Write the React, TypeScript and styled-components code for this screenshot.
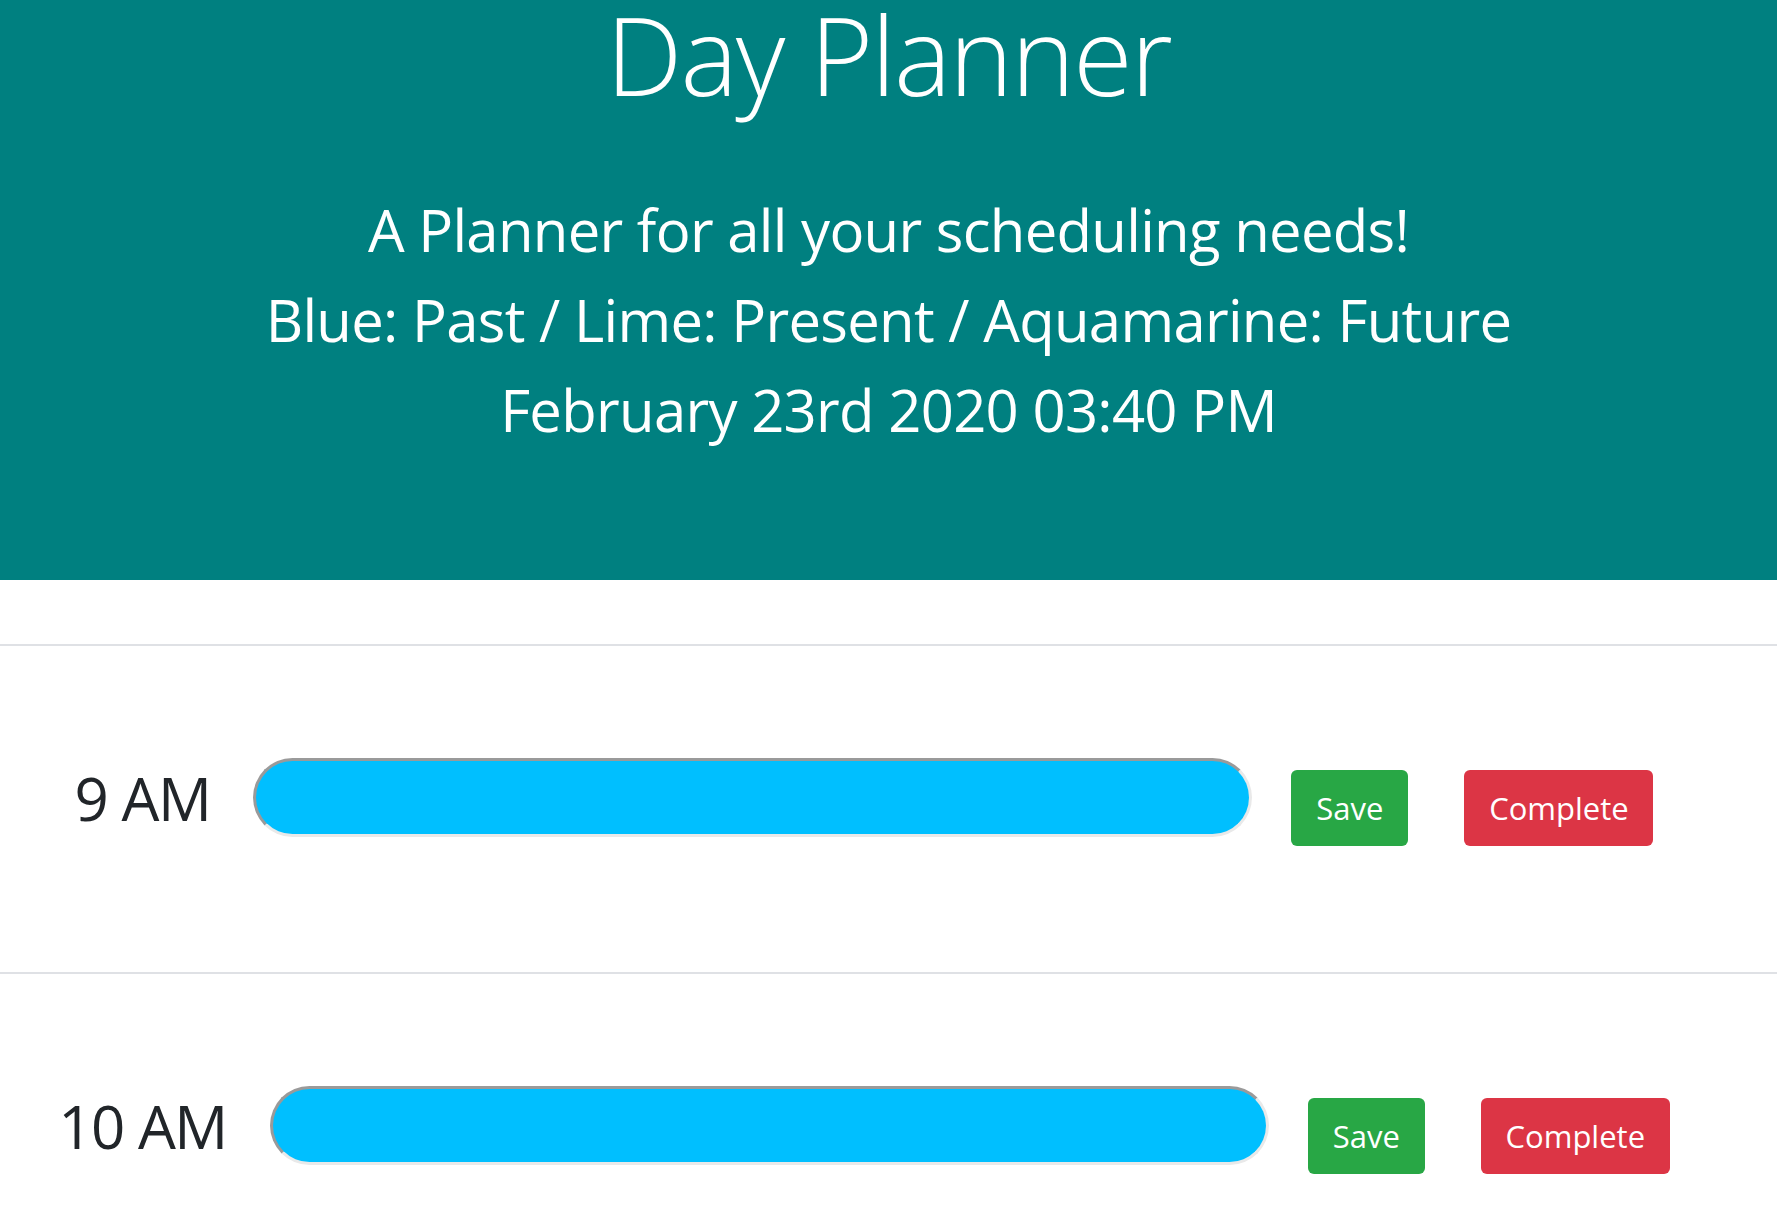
import React from "react";
import styled, { createGlobalStyle } from "styled-components";

const GlobalStyle = createGlobalStyle`
  html, body {
    margin: 0;
    padding: 0;
    background: #ffffff;
    font-family: "Open Sans", "Noto Sans", "Liberation Sans", sans-serif;
  }
  * { box-sizing: border-box; }
`;

const Header = styled.header`
  background: #008080;
  color: #ffffff;
  text-align: center;
  padding: 1px 0 125px;
  margin-bottom: 64px;
`;

const Title = styled.h1`
  margin: 0;
  font-size: 108px;
  font-weight: 300;
  line-height: 1;
  letter-spacing: -1.8px;
`;

const Lead = styled.p`
  margin: 0;
  font-size: 58px;
  font-weight: 400;
  line-height: 90px;
  letter-spacing: -0.7px;
`;

const LeadBlock = styled.div`
  margin-top: 76px;
`;

const Schedule = styled.main`
  display: flex;
  flex-direction: column;
`;

const HourRow = styled.section`
  display: flex;
  justify-content: center;
  align-items: flex-start;
  height: 328px;
  border-top: 2px solid #dfe1e5;
  padding-right: 49px;
`;

const HourLabel = styled.div`
  margin-top: 122px;
  margin-right: 43px;
  font-size: 60px;
  line-height: 1;
  letter-spacing: -1.5px;
  color: #212529;
  white-space: nowrap;
`;

const Entry = styled.textarea<{ $tense: "past" | "present" | "future" }>`
  margin-top: 112px;
  margin-right: 39px;
  width: 999px;
  height: 79px;
  resize: none;
  border-radius: 40px;
  border-style: solid;
  border-width: 3px;
  border-color: #9a9a9a #e9e9e9 #e9e9e9 #9a9a9a;
  outline: none;
  padding: 10px 30px;
  font-family: inherit;
  font-size: 28px;
  background: ${(p) =>
    p.$tense === "past" ? "#00bfff" : p.$tense === "present" ? "#00ff00" : "#7fffd4"};
`;

const ActionButton = styled.button<{ $variant: "save" | "complete" }>`
  margin-top: 124px;
  margin-right: ${(p) => (p.$variant === "save" ? "56px" : "0")};
  width: ${(p) => (p.$variant === "save" ? "117px" : "189px")};
  height: 76px;
  display: flex;
  align-items: center;
  justify-content: center;
  border: none;
  border-radius: 6px;
  font-family: inherit;
  font-size: 31px;
  line-height: normal;
  color: #ffffff;
  background: ${(p) => (p.$variant === "save" ? "#28a745" : "#dc3545")};
  cursor: pointer;
`;

const hours = ["9 AM", "10 AM", "11 AM", "12 PM", "1 PM", "2 PM", "3 PM", "4 PM", "5 PM"];

export default function App() {
  return (
    <>
      <GlobalStyle />
      <Header>
        <Title>Day Planner</Title>
        <LeadBlock>
          <Lead>A Planner for all your scheduling needs!</Lead>
          <Lead>Blue: Past / Lime: Present / Aquamarine: Future</Lead>
          <Lead>February 23rd 2020 03:40 PM</Lead>
        </LeadBlock>
      </Header>
      <Schedule>
        {hours.map((h, i) => (
          <HourRow key={h}>
            <HourLabel>{h}</HourLabel>
            <Entry $tense={i < 6 ? "past" : i === 6 ? "present" : "future"} />
            <ActionButton $variant="save">Save</ActionButton>
            <ActionButton $variant="complete">Complete</ActionButton>
          </HourRow>
        ))}
      </Schedule>
    </>
  );
}
